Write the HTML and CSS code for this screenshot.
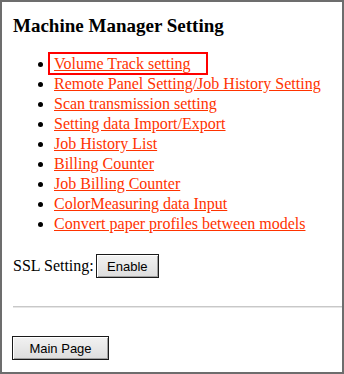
FILE: index.html
```html
<!DOCTYPE html>
<html lang="en">
<head>
    <meta charset="UTF-8">
    <title>Machine Manager Setting</title>
    <link rel="stylesheet" href="styles.css">
</head>
<body>
    <div class="frame">
        <h1>Machine Manager Setting</h1>

        <ul class="menu">
            <li><span class="selected"><a href="#">Volume Track setting</a></span></li>
            <li><a href="#">Remote Panel Setting/Job History Setting</a></li>
            <li><a href="#">Scan transmission setting</a></li>
            <li><a href="#">Setting data Import/Export</a></li>
            <li><a href="#">Job History List</a></li>
            <li><a href="#">Billing Counter</a></li>
            <li><a href="#">Job Billing Counter</a></li>
            <li><a href="#">ColorMeasuring data Input</a></li>
            <li><a href="#">Convert paper profiles between models</a></li>
        </ul>

        <div class="ssl">
            SSL Setting: <button class="btn btn-enable">Enable</button>
        </div>

        <hr class="sep">

        <button class="btn btn-main">Main Page</button>
    </div>
</body>
</html>
```

FILE: styles.css
```css
html, body {
    margin: 0;
    padding: 0;
}
body {
    font-family: "Liberation Serif", "Times New Roman", serif;
    font-size: 16px;
    color: #000;
    background: #fff;
}
.frame {
    height: 370px;
    border: 2px solid #6d6d6d;
    padding-left: 11px;
    overflow: hidden;
}
h1 {
    font-size: 19px;
    font-weight: bold;
    margin: 14px 0 18px 0;
    line-height: 20px;
}
.menu {
    margin: 0;
    padding-left: 41px;
    list-style: disc;
}
.menu li {
    line-height: 20px;
    height: 20px;
}
.menu a {
    color: #ff3300;
    text-decoration: underline;
}
.menu .selected {
    border: 2px solid #ff0000;
    padding: 1px 15px 1px 4px;
    margin-left: -6px;
}
.ssl {
    margin-top: 20px;
    display: flex;
    align-items: center;
    gap: 2px;
}
.btn {
    font-family: "Liberation Sans", Arial, sans-serif;
    font-size: 13px;
    color: #000;
    background: linear-gradient(#f2f2f2, #dddddd);
    border: 1px solid #1a1a1a;
    box-shadow: inset 1px 1px 0 #fff, inset -1px -1px 0 #a0a0a0;
    padding: 0;
    height: 24px;
}
.btn-enable {
    width: 63px;
}
.sep {
    margin: 28px 0 0 0;
    border: 0;
    border-top: 1px solid #c8c8c8;
    border-bottom: 1px solid #e6e6e6;
    height: 0;
}
.btn-main {
    margin-top: 28px;
    margin-left: -1px;
    width: 97px;
}
```
